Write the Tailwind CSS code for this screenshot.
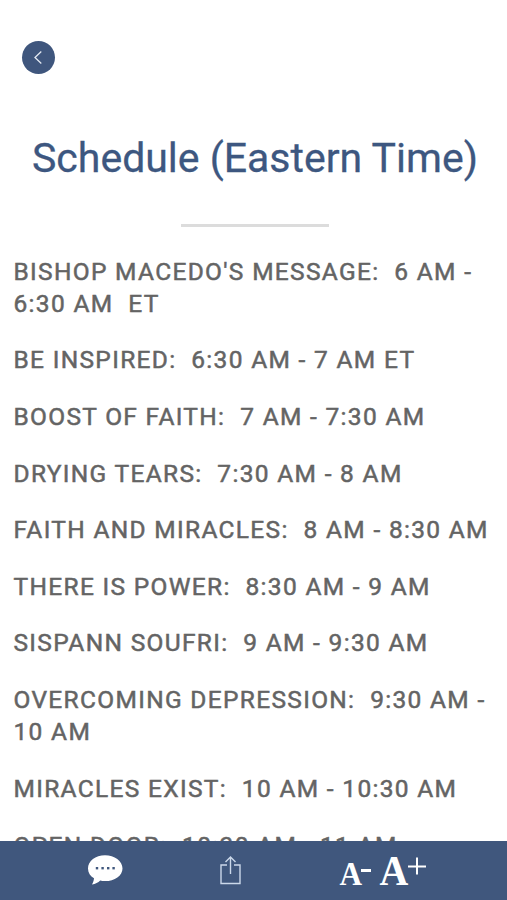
<!DOCTYPE html>
<html lang="en">

<head>
    <meta charset="UTF-8">
    <meta name="viewport" content="width=device-width, initial-scale=1.0">
    <title>Schedule</title>
    <script src="https://cdn.jsdelivr.net/npm/@tailwindcss/browser@4"></script>
</head>

<body class="bg-white font-[Roboto,sans-serif]">
    <div class="h-[900px] flex flex-col overflow-hidden">
        <header class="pt-[41px] pl-[22px]">
            <button class="w-[33px] h-[33px] rounded-full bg-[#3f567d] flex items-center justify-center" type="button">
                <svg width="33" height="33" viewBox="0 0 33 33" fill="none" stroke="#e3e9f2" stroke-width="1.3">
                    <path d="M19.300 10.500 L13 16.500 L19.300 22.500" />
                </svg>
            </button>
        </header>

        <main class="flex-1 min-h-0 overflow-hidden">
            <h1 class="mt-[58px] pl-[3px] text-center text-[41px] leading-[52px] text-[#3d5780] whitespace-nowrap [-webkit-text-stroke:0.3px_#3d5780]">Schedule (Eastern Time)</h1>
            <div class="ml-[181px] mt-[40px] w-[148px] h-[3px] bg-[#dcdcdc]"></div>

            <div class="mt-[28.600px] pl-[13.500px] flex flex-col gap-[24.300px] text-[24.500px] leading-[32.300px] font-normal tracking-[1.320px] text-[#646464] whitespace-pre [-webkit-text-stroke:0.5px_#646464]">
                <p>BISHOP MACEDO'S MESSAGE:  6 AM -<br>6:30 AM  ET</p>
                <p>BE INSPIRED:  6:30 AM - 7 AM ET</p>
                <p>BOOST OF FAITH:  7 AM - 7:30 AM</p>
                <p>DRYING TEARS:  7:30 AM - 8 AM</p>
                <p>FAITH AND MIRACLES:  8 AM - 8:30 AM</p>
                <p>THERE IS POWER:  8:30 AM - 9 AM</p>
                <p>SISPANN SOUFRI:  9 AM - 9:30 AM</p>
                <p>OVERCOMING DEPRESSION:  9:30 AM -<br>10 AM</p>
                <p>MIRACLES EXIST:  10 AM - 10:30 AM</p>
                <p>OPEN DOOR:  10:30 AM - 11 AM</p>
            </div>
        </main>

        <footer class="h-[59px] shrink-0 bg-[#40577d]">
            <svg width="507" height="59" viewBox="0 0 507 59" fill="none">
                <path d="M105 14.300c-9.500 0-17 5.700-17 13.100 0 4.200 2.300 7.600 6 9.900-.2 2.400-.9 4.400-2 6.300 3.500-.5 6.100-2 8.200-4 1.500.4 3.100.5 4.800.5 9.700 0 17.500-5.500 17.500-12.700S114.500 14.300 105 14.300z" fill="#fff" />
                <g fill="#40577d">
                    <rect x="95.800" y="26" width="2.400" height="2.400" />
                    <rect x="101.400" y="26" width="2.400" height="2.400" />
                    <rect x="107" y="26" width="2.400" height="2.400" />
                    <rect x="112.400" y="26" width="2.400" height="2.400" />
                </g>
                <path d="M227 24h-6v18.500h19V24h-6M230.500 33V16M225.500 21l5-5 5 5" stroke="#cbd8ea" stroke-width="1.400" />
                <g fill="#fff" font-family="Liberation Serif, serif" font-weight="700">
                    <text x="0" y="0" font-size="34" transform="translate(339.500 44) scale(.92 1)">A</text>
                    <text x="0" y="0" font-size="42" transform="translate(379.500 44) scale(.95 1)">A</text>
                </g>
                <path d="M361 29.500h10" stroke="#fff" stroke-width="3" />
                <path d="M408 25.500h18M417 16.500v17" stroke="#fff" stroke-width="2" />
            </svg>
        </footer>
    </div>
</body>

</html>
